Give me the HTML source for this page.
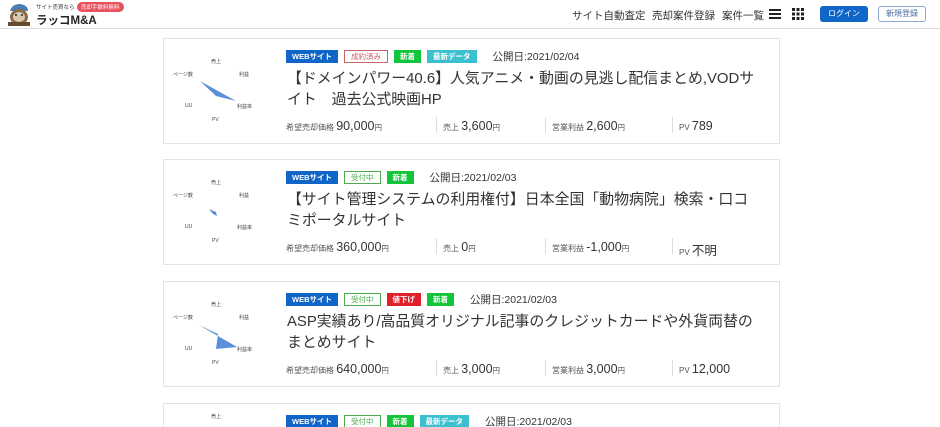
<!DOCTYPE html>
<html><head><meta charset="utf-8"><style>
*{margin:0;padding:0;box-sizing:border-box}
html,body{width:940px;height:427px;overflow:hidden}
body{background:#fff;font-family:"Liberation Sans","Noto Sans CJK JP",sans-serif;color:#333;position:relative}
.hdr{position:absolute;left:0;top:0;width:940px;height:29px;border-bottom:1px solid #ddd;background:#fff}
.nav{position:absolute;top:8px;font-size:10.5px;color:#333;white-space:nowrap}
.card{position:absolute;left:163px;width:617px;height:106px;border:1px solid #e3e3e3;background:#fff}
.lbl{position:absolute;font-size:5px;color:#444}
.badges{position:absolute;left:122px;top:10px;display:flex;align-items:center;height:14px;white-space:nowrap}
.b{font-size:7.5px;height:13px;line-height:13px;padding:0 6px;margin-right:6px;color:#fff;font-weight:bold}
.web{background:#1065c8}.new{background:#12c43a}.dat{background:#3cbfcf}.down{background:#e0202a}
.seiyaku{border:1px solid #c9616a;color:#c9616a;background:#fff;line-height:11px;font-weight:normal}
.uke{border:1px solid #4caa4c;color:#4caa4c;background:#fff;line-height:11px;font-weight:normal}
.date{font-size:10.5px;color:#333;margin-left:10px}
.title{position:absolute;left:123px;top:30px;width:472px;font-size:14.9px;line-height:21px;color:#333}
.st{position:absolute;top:80px;font-size:8px;color:#555;white-space:nowrap}
.st b{font-weight:normal;font-size:12.5px;color:#333}
.st i{font-style:normal;font-size:7.5px}
.dv{position:absolute;top:78px;width:1px;height:16px;background:#ddd}
</style></head><body>
<div class="hdr">
 <svg style="position:absolute;left:6px;top:2px" width="26" height="24" viewBox="0 0 26 24"><path d="M4 9 Q6 2 14 2 Q22 3 22 9 Z" fill="#4a7fb5"/><ellipse cx="13" cy="15" rx="9" ry="8" fill="#8a6a4a"/><ellipse cx="13" cy="15" rx="6" ry="5" fill="#d8c8b0"/><circle cx="10" cy="13" r="1" fill="#222"/><circle cx="16" cy="13" r="1" fill="#222"/><rect x="2" y="20" width="22" height="4" fill="#6a4a2a"/></svg>
 <div style="position:absolute;left:36px;top:3px;font-size:5.5px;color:#333;white-space:nowrap">サイト売買なら</div>
 <div style="position:absolute;left:77px;top:2px;font-size:5.5px;color:#fff;background:#e8505b;border-radius:5px;padding:1px 4px;white-space:nowrap">売却手数料無料</div>
 <div style="position:absolute;left:36px;top:12px;font-size:11.5px;font-weight:bold;color:#222;white-space:nowrap">ラッコM&amp;A</div>
 <div class="nav" style="left:572px">サイト自動査定</div>
 <div class="nav" style="left:652px">売却案件登録</div>
 <div class="nav" style="left:722px">案件一覧</div>
 <svg style="position:absolute;left:769px;top:9px" width="12" height="10"><rect y="0" width="12" height="2" fill="#222"/><rect y="4" width="12" height="2" fill="#222"/><rect y="8" width="12" height="2" fill="#222"/></svg>
 <svg style="position:absolute;left:792px;top:8px" width="12" height="12"><g fill="#222"><rect x="0" y="0" width="3" height="3"/><rect x="4.5" y="0" width="3" height="3"/><rect x="9" y="0" width="3" height="3"/><rect x="0" y="4.5" width="3" height="3"/><rect x="4.5" y="4.5" width="3" height="3"/><rect x="9" y="4.5" width="3" height="3"/><rect x="0" y="9" width="3" height="3"/><rect x="4.5" y="9" width="3" height="3"/><rect x="9" y="9" width="3" height="3"/></g></svg>
 <div style="position:absolute;left:820px;top:6px;width:48px;height:16px;background:#1065c8;border-radius:3px;color:#fff;font-size:8px;text-align:center;line-height:16px">ログイン</div>
 <div style="position:absolute;left:878px;top:6px;width:48px;height:16px;border:1px solid #8aa8d0;border-radius:3px;color:#4a6ea0;font-size:8px;text-align:center;line-height:14px">新規登録</div>
</div>

<div class="card" style="top:38px">
 <div class="lbl" style="left:47px;top:19px">売上</div><div class="lbl" style="left:75px;top:32px">利益</div><div class="lbl" style="left:73px;top:64px">利益率</div><div class="lbl" style="left:48px;top:78px">PV</div><div class="lbl" style="left:21px;top:64px">UU</div><div class="lbl" style="left:9px;top:32px">ページ数</div>
 <svg style="position:absolute;left:0;top:0" width="120" height="105"><polygon points="36,42 72,62 52,57" fill="#5b8fd9"/></svg>
 <div class="badges"><span class="b web">WEBサイト</span><span class="b seiyaku">成約済み</span><span class="b new">新着</span><span class="b dat">最新データ</span><span class="date">公開日:2021/02/04</span></div>
 <div class="title">【ドメインパワー40.6】人気アニメ・動画の見逃し配信まとめ,VODサイト　過去公式映画HP</div>
 <div class="st" style="left:122px">希望売却価格 <b>90,000</b><i>円</i></div>
 <div class="dv" style="left:272px"></div><div class="st" style="left:279px">売上 <b>3,600</b><i>円</i></div>
 <div class="dv" style="left:381px"></div><div class="st" style="left:388px">営業利益 <b>2,600</b><i>円</i></div>
 <div class="dv" style="left:508px"></div><div class="st" style="left:515px">PV <b>789</b></div>
</div>

<div class="card" style="top:159px">
 <div class="lbl" style="left:47px;top:19px">売上</div><div class="lbl" style="left:75px;top:32px">利益</div><div class="lbl" style="left:73px;top:64px">利益率</div><div class="lbl" style="left:48px;top:78px">PV</div><div class="lbl" style="left:21px;top:64px">UU</div><div class="lbl" style="left:9px;top:32px">ページ数</div>
 <svg style="position:absolute;left:0;top:0" width="120" height="105"><polygon points="45,49 52,52 53,56 49,54" fill="#5b8fd9"/></svg>
 <div class="badges"><span class="b web">WEBサイト</span><span class="b uke">受付中</span><span class="b new">新着</span><span class="date">公開日:2021/02/03</span></div>
 <div class="title">【サイト管理システムの利用権付】日本全国「動物病院」検索・口コミポータルサイト</div>
 <div class="st" style="left:122px">希望売却価格 <b>360,000</b><i>円</i></div>
 <div class="dv" style="left:272px"></div><div class="st" style="left:279px">売上 <b>0</b><i>円</i></div>
 <div class="dv" style="left:381px"></div><div class="st" style="left:388px">営業利益 <b>-1,000</b><i>円</i></div>
 <div class="dv" style="left:508px"></div><div class="st" style="left:515px">PV <b>不明</b></div>
</div>

<div class="card" style="top:281px">
 <div class="lbl" style="left:47px;top:19px">売上</div><div class="lbl" style="left:75px;top:32px">利益</div><div class="lbl" style="left:73px;top:64px">利益率</div><div class="lbl" style="left:48px;top:78px">PV</div><div class="lbl" style="left:21px;top:64px">UU</div><div class="lbl" style="left:9px;top:32px">ページ数</div>
 <svg style="position:absolute;left:0;top:0" width="120" height="105"><polygon points="35,43 73,65 52,67 54,52" fill="#5b8fd9"/></svg>
 <div class="badges"><span class="b web">WEBサイト</span><span class="b uke">受付中</span><span class="b down">値下げ</span><span class="b new">新着</span><span class="date">公開日:2021/02/03</span></div>
 <div class="title">ASP実績あり/高品質オリジナル記事のクレジットカードや外貨両替のまとめサイト</div>
 <div class="st" style="left:122px">希望売却価格 <b>640,000</b><i>円</i></div>
 <div class="dv" style="left:272px"></div><div class="st" style="left:279px">売上 <b>3,000</b><i>円</i></div>
 <div class="dv" style="left:381px"></div><div class="st" style="left:388px">営業利益 <b>3,000</b><i>円</i></div>
 <div class="dv" style="left:508px"></div><div class="st" style="left:515px">PV <b>12,000</b></div>
</div>

<div class="card" style="top:403px;height:24px;border-bottom:none">
 <div class="lbl" style="left:47px;top:9px">売上</div>
 <div class="badges"><span class="b web">WEBサイト</span><span class="b uke">受付中</span><span class="b new">新着</span><span class="b dat">最新データ</span><span class="date">公開日:2021/02/03</span></div>
</div>
</body></html>
